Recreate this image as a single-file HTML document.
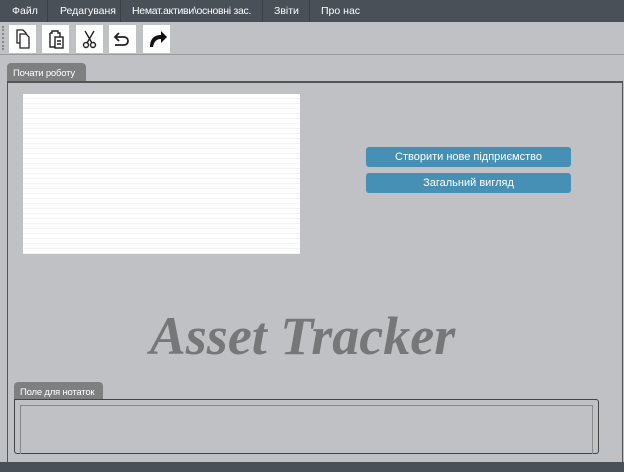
<!DOCTYPE html>
<html><head><meta charset="utf-8"><style>
*{margin:0;padding:0;box-sizing:border-box}
body{width:624px;height:472px;background:#c0c1c4;position:relative;overflow:hidden;font-family:"Liberation Sans","DejaVu Sans",sans-serif}
.menu{position:absolute;left:0;top:0;width:624px;height:22px;background:#4a5057;color:#fff;font-size:10.5px}
.menu span{position:absolute;top:5px;white-space:nowrap}
.sep{position:absolute;top:0;width:1px;height:22px;background:#3a3f45}
.tb{position:absolute;top:25px;width:27px;height:28px;background:#fff}
.tab{position:absolute;background:#7e7f81;color:#fff;font-size:9.5px;border-radius:4px 4px 0 0;padding:5px 6px;white-space:nowrap;letter-spacing:-0.2px}
.btn{position:absolute;left:366px;width:205px;background:#4690b5;color:#fff;font-size:11px;text-align:center;border-radius:3px}
</style></head><body>
<div class="menu">
<span style="left:12px">Файл</span><div class="sep" style="left:47px"></div>
<span style="left:60px">Редагуваня</span><div class="sep" style="left:120px"></div>
<span style="left:132px;letter-spacing:-0.3px">Немат.активи\основні зас.</span><div class="sep" style="left:262px"></div>
<span style="left:274px">Звіти</span><div class="sep" style="left:309px"></div>
<span style="left:321px">Про нас</span>
</div>
<div style="position:absolute;left:2px;top:26px;width:2px;height:24px;border-left:2px dotted #888"></div>
<div class="tb" style="left:9px"><svg width="27" height="28" viewBox="0 0 27 28" fill="none" stroke="#222" stroke-width="1.3"><path d="M8 5h6l3 3v10H8z"/><path d="M11 9h6l3 3v11h-9z" fill="#fff"/></svg></div>
<div class="tb" style="left:42px"><svg width="27" height="28" viewBox="0 0 27 28" fill="none" stroke="#222" stroke-width="1.4"><path d="M8 8h2v-2h6v2h2v4"/><path d="M8 8v14h5"/><rect x="13" y="12" width="8" height="11"/><path d="M15 16h4M15 19h4"/></svg></div>
<div class="tb" style="left:76px"><svg width="27" height="28" viewBox="0 0 27 28" fill="none" stroke="#222" stroke-width="1.4"><path d="M9 6l7 12M18 6l-7 12"/><circle cx="10" cy="20" r="2.5"/><circle cx="17" cy="20" r="2.5"/></svg></div>
<div class="tb" style="left:109px"><svg width="27" height="28" viewBox="0 0 27 28" fill="none" stroke="#222" stroke-width="1.8"><path d="M10 8l-4 4 4 4"/><path d="M6 12h9a4 4 0 0 1 0 8h-9"/></svg></div>
<div class="tb" style="left:143px"><svg width="27" height="28" viewBox="0 0 27 28" fill="#111"><path d="M7 22c0-8 4-12 11-12v-4l6 6-6 6v-4c-5 0-7 3-8 8z"/></svg></div>
<div style="position:absolute;left:0;top:54px;width:624px;height:1px;background:#9a9b9e"></div>
<div class="tab" style="left:7px;top:63px;width:79px;height:19px">Почати роботу</div>
<div style="position:absolute;left:7px;top:81px;width:616px;height:384px;border:1px solid #555;border-top:2px solid #555;border-bottom:none"></div>
<div style="position:absolute;left:23px;top:94px;width:277px;height:160px;background:#fff;background-image:repeating-linear-gradient(#fff 0 4px,#f3f3f3 4px 5px)"></div>
<div class="btn" style="top:147px;height:20px;line-height:20px">Створити нове підприємство</div>
<div class="btn" style="top:173px;height:20px;line-height:20px">Загальний вигляд</div>
<div style="position:absolute;left:147px;top:305px;width:311px;text-align:center;white-space:nowrap;font-family:'Liberation Serif',serif;font-weight:bold;font-style:italic;font-size:54px;line-height:62px;color:#767778">Asset Tracker</div>
<div class="tab" style="left:14px;top:382px;width:89px;height:18px">Поле для нотаток</div>
<div style="position:absolute;left:14px;top:399px;width:585px;height:55px;border:1px solid #444;border-radius:0 3px 3px 3px"></div>
<div style="position:absolute;left:20px;top:405px;width:573px;height:49px;border:1px solid #888;border-bottom:none"></div>
<div style="position:absolute;left:0;top:462px;width:624px;height:10px;background:#4a5057"></div>
</body></html>
